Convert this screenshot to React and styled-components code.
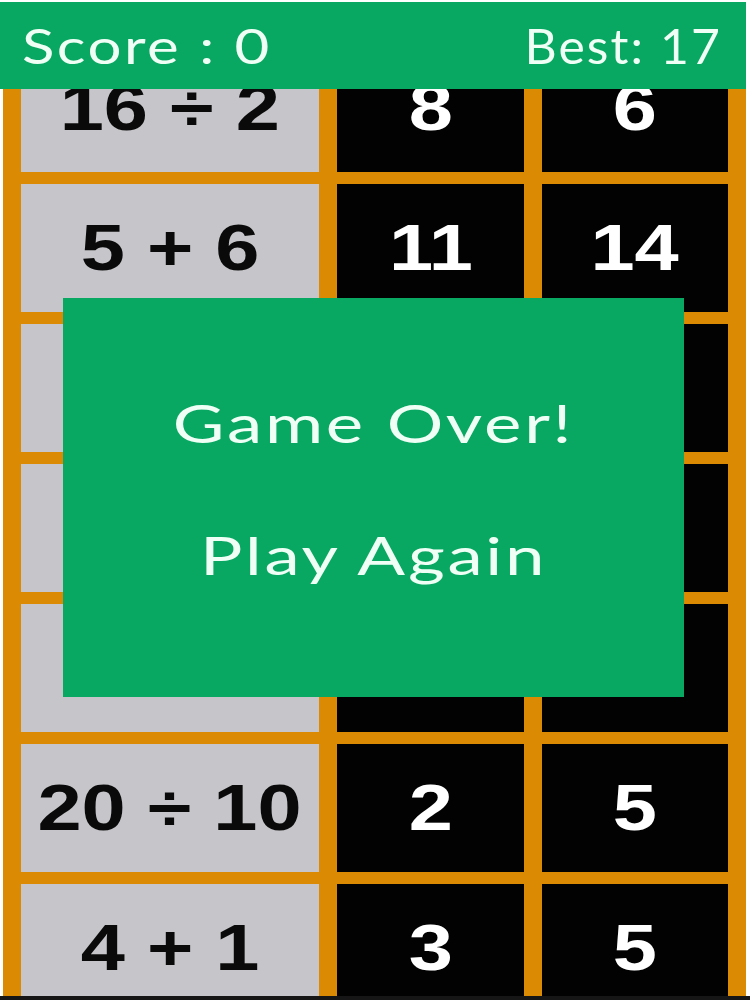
import React from 'react'
import styled, { createGlobalStyle } from 'styled-components'

const GlobalStyle = createGlobalStyle`
  html, body {
    margin: 0;
    padding: 0;
    background: #fff;
  }
  * { box-sizing: border-box; }
`

const GREEN = '#08a862'
const ORANGE = '#db8a04'

// rows 3-5 sit under the game over box, so they are left blank
const rows = [
  ['16 ÷ 2', '8', '6'],
  ['5 + 6', '11', '14'],
  ['', '', ''],
  ['', '', ''],
  ['', '', ''],
  ['20 ÷ 10', '2', '5'],
  ['4 + 1', '3', '5'],
]

const App = () => {
  return (
    <>
      <GlobalStyle />
      <Screen>
        <Header>
          <HeaderText $scale={1.25} $origin="left">Score : 0</HeaderText>
          <HeaderText $scale={1.04} $origin="right">Best: 17</HeaderText>
        </Header>

        <Board>
          {rows.map((row, i) => (
            <React.Fragment key={i}>
              <Cell question>
                {row[0] && <Label>{row[0]}</Label>}
              </Cell>
              <Cell>
                {row[1] && <Label light>{row[1]}</Label>}
              </Cell>
              <Cell>
                {row[2] && <Label light>{row[2]}</Label>}
              </Cell>
            </React.Fragment>
          ))}
        </Board>
        <BottomEdge />

        <Modal>
          <ModalText>Game Over!</ModalText>
          <ModalText as="button">Play Again</ModalText>
        </Modal>
      </Screen>
    </>
  )
}

export default App

const Screen = styled.div`
  position: relative;
  width: 750px;
  height: 1000px;
  overflow: hidden;
  display: flex;
  flex-direction: column;
  padding-top: 2px;
`

const Header = styled.header`
  position: absolute;
  top: 2px;
  left: 0;
  width: 746px;
  height: 87px;
  z-index: 2;
  background: ${GREEN};
  display: flex;
  align-items: center;
  justify-content: space-between;
  padding: 0 24px 0 22px;
`

const HeaderText = styled.span`
  display: inline-block;
  font-family: Lato, "Open Sans", sans-serif;
  font-weight: 400;
  font-size: 48px;
  letter-spacing: 2px;
  color: #effff6;
  line-height: 1;
  transform: scaleX(${(props) => props.$scale});
  transform-origin: ${(props) => props.$origin} center;
`

const Board = styled.main`
  flex: 1;
  min-height: 0;
  overflow: hidden;
  margin: 0 4px 0 3px;
  padding: 42px 18px 0;
  background: ${ORANGE};
  display: grid;
  grid-template-columns: 298px 187px 186px;
  grid-auto-rows: 128px;
  column-gap: 18px;
  row-gap: 12px;
`

const Cell = styled.div`
  background: ${(props) => (props.question ? '#c6c5c9' : '#020202')};
  display: flex;
  align-items: center;
  justify-content: center;
`

const Label = styled.span`
  display: inline-block;
  font-family: "Liberation Sans", Arial, sans-serif;
  font-weight: 700;
  font-size: 64px;
  line-height: 1;
  white-space: pre;
  color: ${(props) => (props.light ? '#ffffff' : '#0a0a0a')};
  transform: scaleX(1.24);
`

const BottomEdge = styled.div`
  height: 4px;
  flex-shrink: 0;
  background: #161616;
`

const Modal = styled.section`
  position: absolute;
  left: 63px;
  top: 298px;
  width: 621px;
  height: 399px;
  z-index: 3;
  background: ${GREEN};
  display: flex;
  flex-direction: column;
  align-items: center;
  justify-content: center;
  gap: 80px;
  padding-bottom: 18px;
`

const ModalText = styled.div`
  display: inline-block;
  font-family: Lato, "Open Sans", sans-serif;
  font-weight: 400;
  font-size: 52px;
  letter-spacing: 2px;
  line-height: 1;
  color: #effff6;
  background: none;
  border: none;
  padding: 0;
  cursor: pointer;
  transform: scaleX(1.36);
`
